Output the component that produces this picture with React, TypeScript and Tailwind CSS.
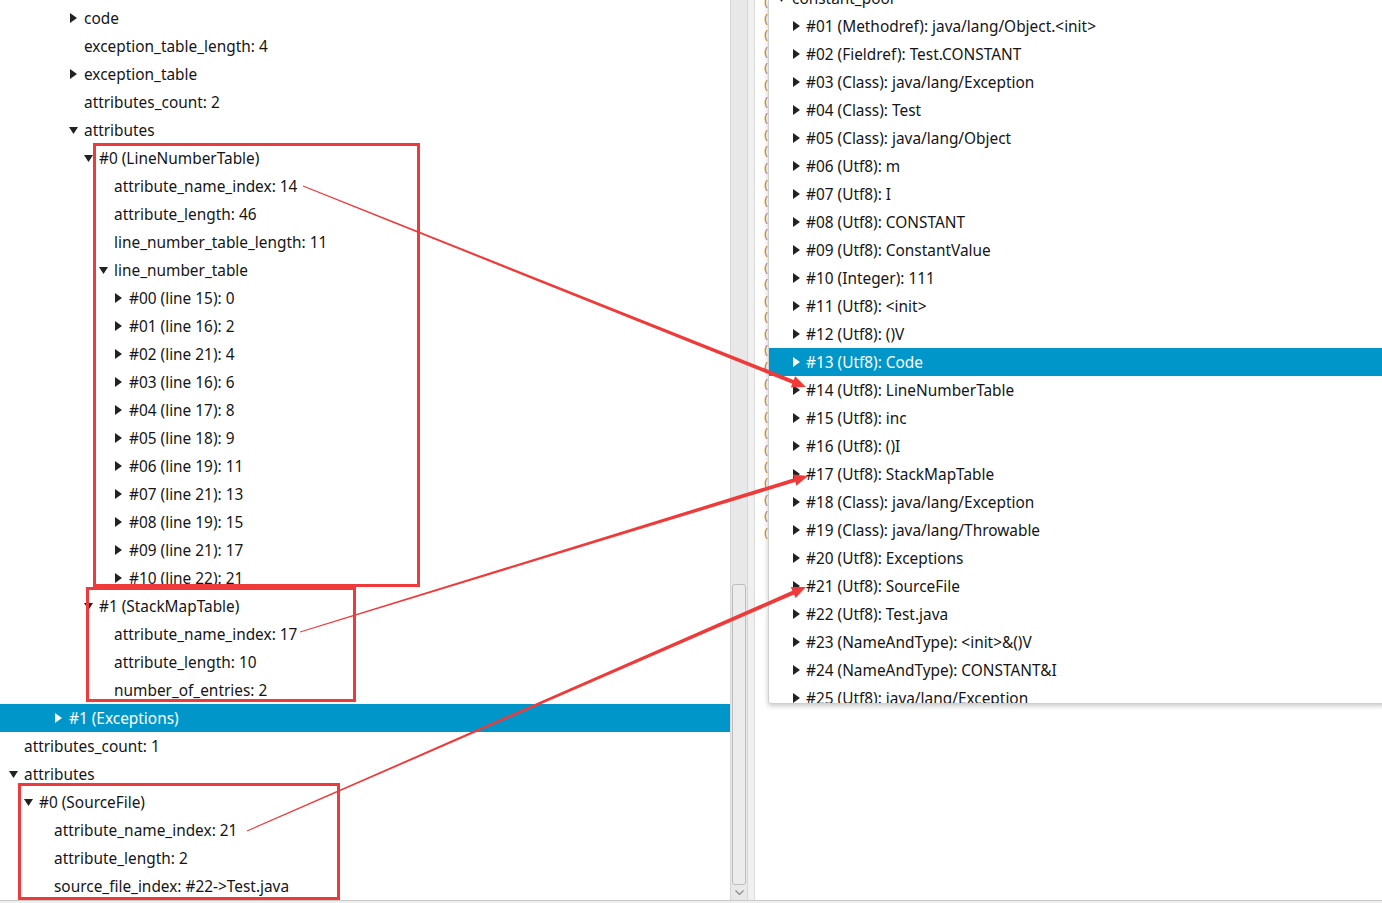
import React from "react";

type Row = { lvl: number; t: "" | "r" | "d"; text: string; sel?: boolean };

const leftRows: Row[] = [
  { lvl: 4, t: "r", text: "code" },
  { lvl: 4, t: "", text: "exception_table_length: 4" },
  { lvl: 4, t: "r", text: "exception_table" },
  { lvl: 4, t: "", text: "attributes_count: 2" },
  { lvl: 4, t: "d", text: "attributes" },
  { lvl: 5, t: "d", text: "#0 (LineNumberTable)" },
  { lvl: 6, t: "", text: "attribute_name_index: 14" },
  { lvl: 6, t: "", text: "attribute_length: 46" },
  { lvl: 6, t: "", text: "line_number_table_length: 11" },
  { lvl: 6, t: "d", text: "line_number_table" },
  { lvl: 7, t: "r", text: "#00 (line 15): 0" },
  { lvl: 7, t: "r", text: "#01 (line 16): 2" },
  { lvl: 7, t: "r", text: "#02 (line 21): 4" },
  { lvl: 7, t: "r", text: "#03 (line 16): 6" },
  { lvl: 7, t: "r", text: "#04 (line 17): 8" },
  { lvl: 7, t: "r", text: "#05 (line 18): 9" },
  { lvl: 7, t: "r", text: "#06 (line 19): 11" },
  { lvl: 7, t: "r", text: "#07 (line 21): 13" },
  { lvl: 7, t: "r", text: "#08 (line 19): 15" },
  { lvl: 7, t: "r", text: "#09 (line 21): 17" },
  { lvl: 7, t: "r", text: "#10 (line 22): 21" },
  { lvl: 5, t: "d", text: "#1 (StackMapTable)" },
  { lvl: 6, t: "", text: "attribute_name_index: 17" },
  { lvl: 6, t: "", text: "attribute_length: 10" },
  { lvl: 6, t: "", text: "number_of_entries: 2" },
  { lvl: 3, t: "r", text: "#1 (Exceptions)", sel: true },
  { lvl: 0, t: "", text: "attributes_count: 1" },
  { lvl: 0, t: "d", text: "attributes" },
  { lvl: 1, t: "d", text: "#0 (SourceFile)" },
  { lvl: 2, t: "", text: "attribute_name_index: 21" },
  { lvl: 2, t: "", text: "attribute_length: 2" },
  { lvl: 2, t: "", text: "source_file_index: #22->Test.java" },
];

const padByLevel: Record<number, string> = {
  0: "pl-[10px]",
  1: "pl-[25px]",
  2: "pl-[40px]",
  3: "pl-[55px]",
  4: "pl-[70px]",
  5: "pl-[85px]",
  6: "pl-[100px]",
  7: "pl-[115px]",
};

const poolRows: string[] = [
  "#01 (Methodref): java/lang/Object.<init>",
  "#02 (Fieldref): Test.CONSTANT",
  "#03 (Class): java/lang/Exception",
  "#04 (Class): Test",
  "#05 (Class): java/lang/Object",
  "#06 (Utf8): m",
  "#07 (Utf8): I",
  "#08 (Utf8): CONSTANT",
  "#09 (Utf8): ConstantValue",
  "#10 (Integer): 111",
  "#11 (Utf8): <init>",
  "#12 (Utf8): ()V",
  "#13 (Utf8): Code",
  "#14 (Utf8): LineNumberTable",
  "#15 (Utf8): inc",
  "#16 (Utf8): ()I",
  "#17 (Utf8): StackMapTable",
  "#18 (Class): java/lang/Exception",
  "#19 (Class): java/lang/Throwable",
  "#20 (Utf8): Exceptions",
  "#21 (Utf8): SourceFile",
  "#22 (Utf8): Test.java",
  "#23 (NameAndType): <init>&()V",
  "#24 (NameAndType): CONSTANT&I",
  "#25 (Utf8): java/lang/Exception",
];

function Tri({ t, white }: { t: "" | "r" | "d"; white?: boolean }) {
  const fill = white ? "#ffffff" : "#222222";
  if (t === "r")
    return (
      <svg width="7" height="10" viewBox="0 0 7 10" className="shrink-0">
        <polygon points="0,0 7,5 0,10" fill={fill} />
      </svg>
    );
  if (t === "d")
    return (
      <svg width="9" height="7" viewBox="0 0 9 7" className="shrink-0 -ml-[1px]">
        <polygon points="0,0 9,0 4.5,7" fill={fill} />
      </svg>
    );
  return null;
}

function Arrow({ x1, y1, x2, y2 }: { x1: number; y1: number; x2: number; y2: number }) {
  const dx = x2 - x1;
  const dy = y2 - y1;
  const len = Math.hypot(dx, dy);
  const ux = dx / len;
  const uy = dy / len;
  const nx = -uy;
  const ny = ux;
  const headLen = 14;
  const headW = 6;
  const bx = x2 - ux * headLen;
  const by = y2 - uy * headLen;
  const w0 = 0.5;
  const w1 = 2;
  const pts = [
    [x1 + nx * w0, y1 + ny * w0],
    [bx + nx * w1, by + ny * w1],
    [bx + nx * headW, by + ny * headW],
    [x2, y2],
    [bx - nx * headW, by - ny * headW],
    [bx - nx * w1, by - ny * w1],
    [x1 - nx * w0, y1 - ny * w0],
  ]
    .map((p) => `${p[0].toFixed(1)},${p[1].toFixed(1)}`)
    .join(" ");
  return <polygon points={pts} fill="#f03a3a" />;
}

export default function App() {
  const parens = Array.from({ length: 33 });
  return (
    <div className="relative w-[1382px] h-[903px] overflow-hidden bg-white font-['Noto_Sans',sans-serif] text-[15.4px] text-[#151515]">
      <div className="flex h-[900px]">
        {/* left tree */}
        <div className="w-[730px] shrink-0 flex flex-col pt-[4px] overflow-hidden">
          {leftRows.map((r, i) => (
            <div
              key={i}
              className={`h-[28px] shrink-0 flex items-center ${padByLevel[r.lvl]} ${
                r.sel ? "bg-[#0096c9] text-white" : ""
              }`}
            >
              <div className="w-[14px] shrink-0 flex items-center">
                <Tri t={r.t} white={r.sel} />
              </div>
              <span className="whitespace-pre leading-none relative top-[1px]">{r.text}</span>
            </div>
          ))}
        </div>

        {/* scrollbar */}
        <div className="w-[18px] shrink-0 bg-[#e8e8e8] border-x border-[#d6d6d6] flex flex-col">
          <div className="h-[584px] shrink-0" />
          <div className="h-[301px] shrink-0 mx-[1px] rounded-[3px] border border-[#bdbdbd] bg-[#ececec]" />
          <div className="flex-1 flex items-center justify-center">
            <svg width="9" height="5" viewBox="0 0 9 5">
              <polyline points="0.5,0.5 4.5,4.5 8.5,0.5" fill="none" stroke="#8a8a8a" strokeWidth="1.2" />
            </svg>
          </div>
        </div>

        {/* splitter */}
        <div className="w-[7px] shrink-0 bg-[#f0f0f0] border-r border-[#dcdcdc]" />

        {/* right editor area */}
        <div className="relative flex-1 bg-white">
          <div className="absolute left-[7px] top-[-5px] h-[560px] overflow-hidden flex flex-col text-[13px] leading-[16.6px] text-[#c98236] font-['DejaVu_Sans_Mono',monospace]">
            {parens.map((_, i) => (
              <span key={i}>(</span>
            ))}
          </div>

          {/* popup */}
          <div className="absolute left-[13px] top-[-2px] right-[-4px] h-[706px] bg-white border border-[#cfcfcf] rounded-[3px] shadow-[0_2px_5px_rgba(0,0,0,0.22)] overflow-hidden">
            <div className="flex flex-col mt-[-15px]">
              <div className="h-[28px] shrink-0 flex items-center pl-[9px]">
                <div className="w-[14px] shrink-0 flex items-center">
                  <Tri t="d" />
                </div>
                <span className="whitespace-pre leading-none relative top-[1px]">constant_pool</span>
              </div>
              {poolRows.map((t, i) => {
                const sel = i === 12;
                return (
                  <div
                    key={i}
                    className={`h-[28px] shrink-0 flex items-center pl-[24px] ${
                      sel ? "bg-[#0096c9] text-white" : ""
                    }`}
                  >
                    <div className="w-[13px] shrink-0 flex items-center">
                      <Tri t="r" white={sel} />
                    </div>
                    <span className="whitespace-pre leading-none relative top-[1px]">{t}</span>
                  </div>
                );
              })}
            </div>
          </div>
        </div>
      </div>

      {/* bottom edge */}
      <div className="h-[1px] bg-[#c9c9c9]" />
      <div className="h-[2px] bg-[#efefef]" />

      {/* annotations */}
      <svg className="absolute inset-0 pointer-events-none" width="1382" height="903" viewBox="0 0 1382 903">
        <rect x="94.5" y="144.5" width="324" height="441" fill="none" stroke="#ee3a3a" strokeWidth="3" />
        <rect x="87.5" y="588.5" width="267" height="112" fill="none" stroke="#ee3a3a" strokeWidth="3" />
        <rect x="19.5" y="784.5" width="319" height="114" fill="none" stroke="#ee3a3a" strokeWidth="3" />
        <Arrow x1={303} y1={186} x2={806} y2={387} />
        <Arrow x1={300} y1={632} x2={808} y2={476} />
        <Arrow x1={247} y1={831} x2={806} y2={587} />
      </svg>
    </div>
  );
}
